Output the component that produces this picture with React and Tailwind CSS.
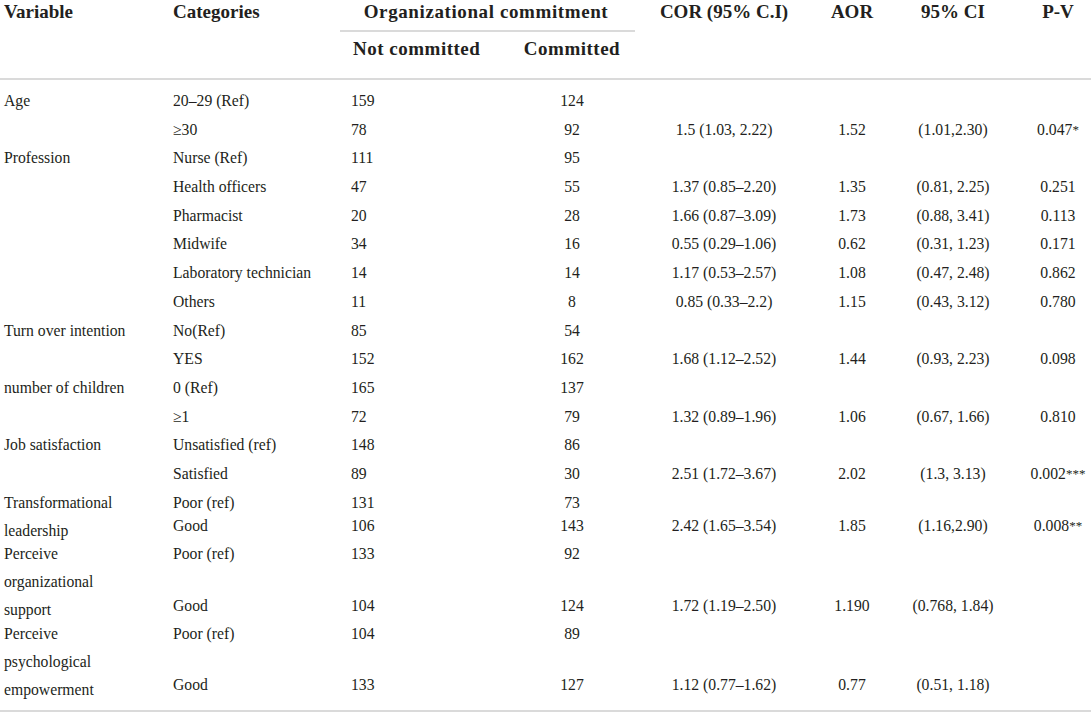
import React from 'react';

const GRID = "grid grid-cols-[168px_172px_169px_126px_178px_78px_124px_76px]";
const SUB = "grid grid-cols-[172px_169px_126px_178px_78px_124px_76px]";

const rows = [
    { v: 'Age', c: '20–29 (Ref)', nc: '159', cm: '124' },
    { v: '', c: '≥30', nc: '78', cm: '92', cor: '1.5 (1.03, 2.22)', aor: '1.52', ci: '(1.01,2.30)', p: '0.047', s: '*' },
    { v: 'Profession', c: 'Nurse (Ref)', nc: '111', cm: '95' },
    { v: '', c: 'Health officers', nc: '47', cm: '55', cor: '1.37 (0.85–2.20)', aor: '1.35', ci: '(0.81, 2.25)', p: '0.251' },
    { v: '', c: 'Pharmacist', nc: '20', cm: '28', cor: '1.66 (0.87–3.09)', aor: '1.73', ci: '(0.88, 3.41)', p: '0.113' },
    { v: '', c: 'Midwife', nc: '34', cm: '16', cor: '0.55 (0.29–1.06)', aor: '0.62', ci: '(0.31, 1.23)', p: '0.171' },
    { v: '', c: 'Laboratory technician', nc: '14', cm: '14', cor: '1.17 (0.53–2.57)', aor: '1.08', ci: '(0.47, 2.48)', p: '0.862' },
    { v: '', c: 'Others', nc: '11', cm: '8', cor: '0.85 (0.33–2.2)', aor: '1.15', ci: '(0.43, 3.12)', p: '0.780' },
    { v: 'Turn over intention', c: 'No(Ref)', nc: '85', cm: '54' },
    { v: '', c: 'YES', nc: '152', cm: '162', cor: '1.68 (1.12–2.52)', aor: '1.44', ci: '(0.93, 2.23)', p: '0.098' },
    { v: 'number of children', c: '0 (Ref)', nc: '165', cm: '137' },
    { v: '', c: '≥1', nc: '72', cm: '79', cor: '1.32 (0.89–1.96)', aor: '1.06', ci: '(0.67, 1.66)', p: '0.810' },
    { v: 'Job satisfaction', c: 'Unsatisfied (ref)', nc: '148', cm: '86' },
    { v: '', c: 'Satisfied', nc: '89', cm: '30', cor: '2.51 (1.72–3.67)', aor: '2.02', ci: '(1.3, 3.13)', p: '0.002', s: '***' },
];

const groups = [
    {
        lines: ['Transformational', 'leadership'], h: 'grid-rows-[51px]',
        top: { c: 'Poor (ref)', nc: '131', cm: '73' },
        bot: { c: 'Good', nc: '106', cm: '143', cor: '2.42 (1.65–3.54)', aor: '1.85', ci: '(1.16,2.90)', p: '0.008', s: '**' },
    },
    {
        lines: ['Perceive', 'organizational', 'support'], h: 'grid-rows-[80px]',
        top: { c: 'Poor (ref)', nc: '133', cm: '92' },
        bot: { c: 'Good', nc: '104', cm: '124', cor: '1.72 (1.19–2.50)', aor: '1.190', ci: '(0.768, 1.84)' },
    },
    {
        lines: ['Perceive', 'psychological', 'empowerment'], h: 'grid-rows-[79px]',
        top: { c: 'Poor (ref)', nc: '104', cm: '89' },
        bot: { c: 'Good', nc: '133', cm: '127', cor: '1.12 (0.77–1.62)', aor: '0.77', ci: '(0.51, 1.18)' },
    },
];

const PVal = ({ p, s }) => (
    <>
        {p}
        {s && <sup className="text-[13px] relative -top-[1px]">{s}</sup>}
    </>
);

// the cells after the variable label, one line tall
const Cells = ({ r, lh }) => (
    <>
        <div className={`pl-[5px] whitespace-nowrap ${lh}`}>{r.c}</div>
        <div className={`pl-[11px] ${lh}`}>{r.nc}</div>
        <div className={`text-center ${lh}`}>{r.cm}</div>
        <div className={`text-center ${lh}`}>{r.cor}</div>
        <div className={`text-center ${lh}`}>{r.aor}</div>
        <div className={`text-center whitespace-nowrap ${lh}`}>{r.ci}</div>
        <div className={`text-center pl-[10px] whitespace-nowrap ${lh}`}>{r.p && <PVal p={r.p} s={r.s} />}</div>
    </>
);

const App = () => {
    return (
        <div className="w-[1091px] h-[715px] bg-white text-[#231f20] font-['Liberation_Serif',serif] overflow-hidden">
            {/* ── HEADER ── */}
            <div className={`${GRID} grid-rows-[30px_2px_46px] text-[19px] font-bold leading-[24px]`}>
                <div className="row-span-3 pl-1">Variable</div>
                <div className="row-span-3 pl-[5px]">Categories</div>
                <div className="col-span-2 text-center pr-[3px] tracking-[0.6px]">Organizational commitment</div>
                <div className="row-span-3 text-center">COR (95% C.I)</div>
                <div className="row-span-3 text-center">AOR</div>
                <div className="row-span-3 text-center">95% CI</div>
                <div className="row-span-3 text-center pl-[10px]">P-V</div>
                <div className="col-span-2 bg-[#dadada]" />
                <div className="pl-[13px] pt-[5px] whitespace-nowrap tracking-[0.5px]">Not committed</div>
                <div className="text-center pt-[5px] tracking-[0.5px]">Committed</div>
            </div>
            <div className="h-[2px] bg-[#dadada]" />

            {/* ── BODY ── */}
            <div className="pt-[7px] pb-[11px] text-[15.7px]">
                {rows.map((r, i) => (
                    <div key={i} className={`${GRID} h-[28.7px]`}>
                        <div className="pl-1 whitespace-nowrap leading-[28.7px]">{r.v}</div>
                        <Cells r={r} lh="leading-[28.7px]" />
                    </div>
                ))}
                {groups.map((g, i) => (
                    <div key={i} className={`${GRID} ${g.h}`}>
                        <div className="pl-1 leading-[28px] whitespace-nowrap">
                            {g.lines.map((l) => <div key={l}>{l}</div>)}
                        </div>
                        <div className="col-span-7 grid grid-rows-[minmax(0,1fr)_28px]">
                            <div className={SUB}>
                                <Cells r={g.top} lh="leading-[28px]" />
                            </div>
                            <div className={SUB}>
                                <Cells r={g.bot} lh="leading-[28px]" />
                            </div>
                        </div>
                    </div>
                ))}
            </div>
            <div className="h-[2px] bg-[#dadada]" />
        </div>
    );
};

export default App;
